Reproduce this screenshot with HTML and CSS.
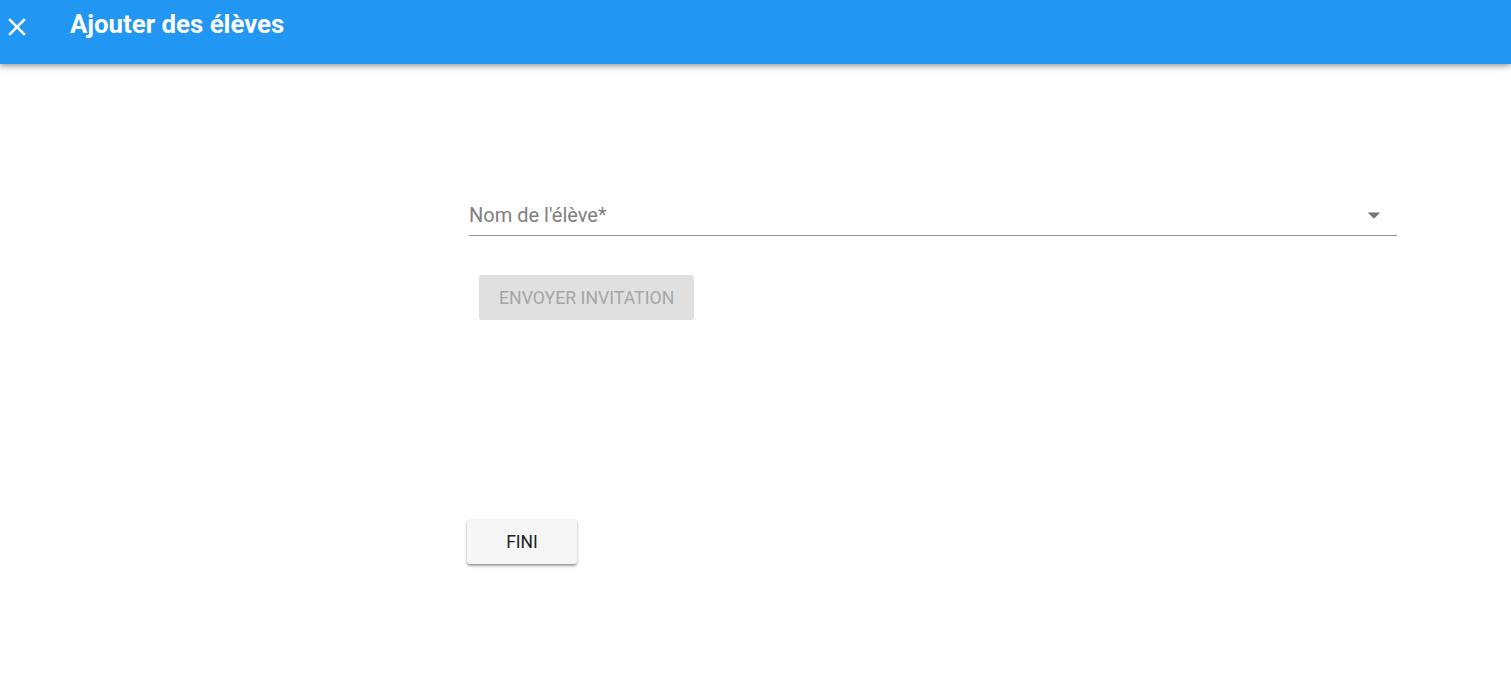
FILE: index.html
```html
<!DOCTYPE html>
<html lang="fr">
<head>
<meta charset="utf-8">
<title>Ajouter des élèves</title>
<link rel="stylesheet" href="styles.css">
</head>
<body>
<header class="toolbar">
  <button class="close-btn" aria-label="Fermer">
    <svg width="30" height="30" viewBox="0 0 24 24"><path d="M19 6.41L17.59 5 12 10.59 6.41 5 5 6.41 10.59 12 5 17.59 6.41 19 12 13.41 17.59 19 19 17.59 13.41 12z" fill="#fff"/></svg>
  </button>
  <h1 class="title">Ajouter des élèves</h1>
</header>
<main class="content">
  <div class="form">
    <div class="select-field">
      <span class="label">Nom de l'élève*</span>
      <svg class="arrow" width="30" height="30" viewBox="0 0 24 24"><path d="M7 10l5 5 5-5z" fill="#757575"/></svg>
    </div>
    <div class="invite-row">
      <button class="btn btn-disabled" disabled>Envoyer invitation</button>
    </div>
    <div class="done-row">
      <button class="btn btn-raised">Fini</button>
    </div>
  </div>
</main>
</body>
</html>
```

FILE: styles.css
```css
* { box-sizing: border-box; }
html, body {
  margin: 0;
  padding: 0;
  background: #fff;
  font-family: Roboto, "Liberation Sans", Arial, sans-serif;
}
.toolbar {
  height: 64px;
  background: #2196f3;
  display: flex;
  align-items: center;
  box-shadow: 0 2px 4px -1px rgba(0,0,0,0.2), 0 4px 5px 0 rgba(0,0,0,0.14), 0 1px 10px 0 rgba(0,0,0,0.12);
  position: relative;
  z-index: 1;
}
.close-btn {
  width: 30px;
  height: 30px;
  margin-left: 2px;
  margin-bottom: 10px;
  padding: 0;
  border: 0;
  background: transparent;
  display: flex;
  align-items: center;
  justify-content: center;
  cursor: pointer;
}
.title {
  margin: 0 0 0 38px;
  color: #fff;
  font-size: 25.8px;
  font-weight: 700;
  line-height: 1;
  padding-bottom: 15px;
}
.content {
  display: flex;
  padding-bottom: 40px;
}
.form {
  margin-left: 467px;
  width: 930px;
  padding-top: 136px;
  display: flex;
  flex-direction: column;
}
.select-field {
  margin-left: 2px;
  height: 36px;
  border-bottom: 1px solid #949494;
  display: flex;
  align-items: center;
  justify-content: space-between;
  padding-bottom: 5px;
}
.label {
  font-size: 20px;
  color: #7f7f7f;
}
.arrow {
  margin-right: 8px;
}
.invite-row {
  padding-top: 39px;
  padding-left: 12px;
}
.btn {
  font-family: Roboto, "Liberation Sans", Arial, sans-serif;
  font-size: 17.5px;
  font-weight: 500;
  text-transform: uppercase;
  border: 0;
  border-radius: 3px;
  height: 45px;
  padding: 0 20px;
}
.btn-disabled {
  background: #e0e0e0;
  color: #a6a6a6;
  font-weight: 400;
  font-size: 17.7px;
}
.btn-raised {
  background: #f5f5f5;
  color: #222;
  width: 110px;
  font-weight: 400;
  box-shadow: 0 2px 3px 0 rgba(0,0,0,0.35), 0 1px 1px 0 rgba(0,0,0,0.12);
}
.done-row {
  padding-top: 199px;
}
```
